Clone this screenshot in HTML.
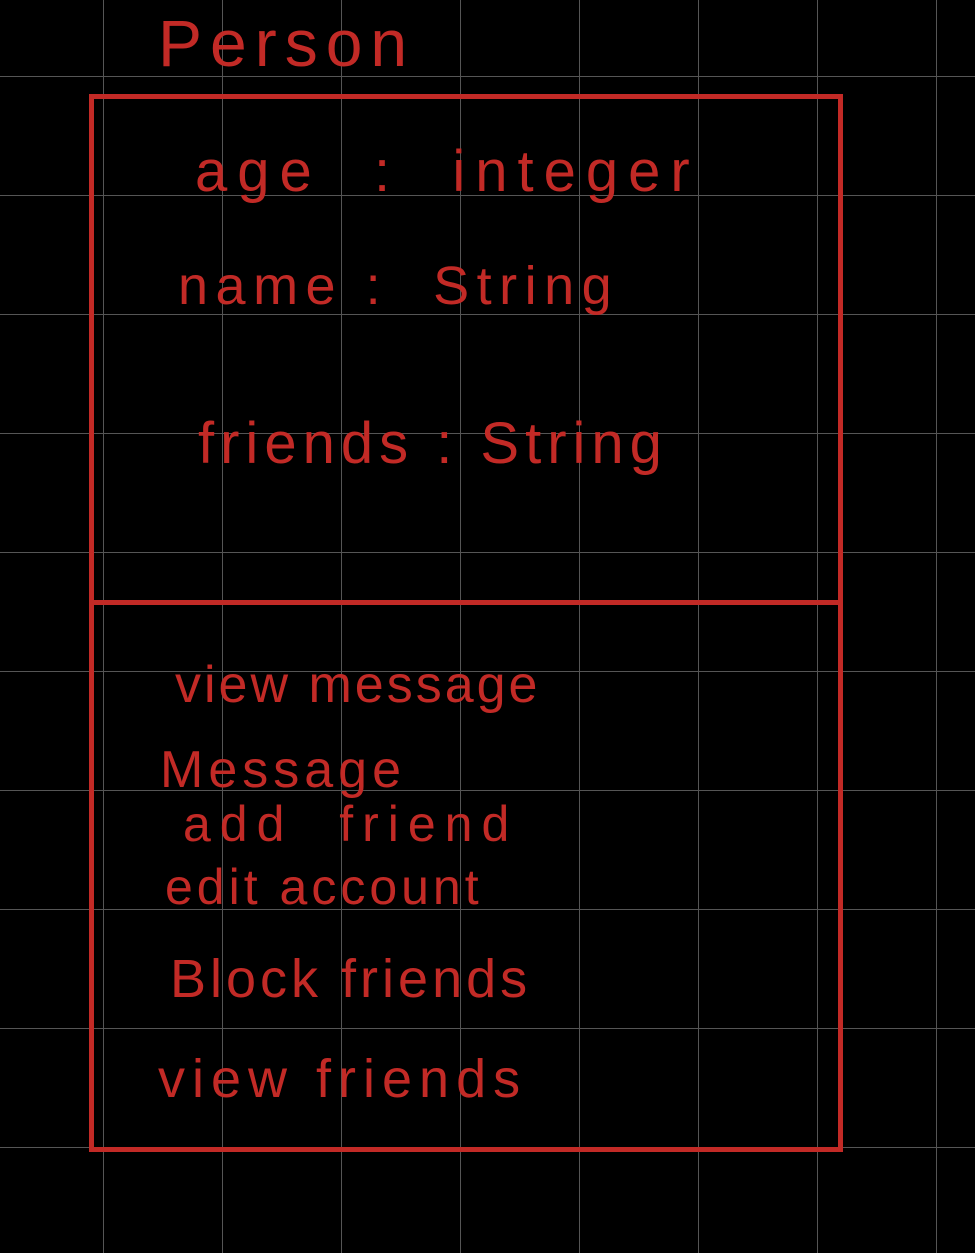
<!DOCTYPE html>
<html><head><style>
html,body{margin:0;padding:0;background:#000;}
body{width:975px;height:1253px;position:relative;overflow:hidden;
background-color:#000;
background-image:
linear-gradient(to right, #555 1px, transparent 1px),
linear-gradient(to bottom, #555 1px, transparent 1px);
background-size:119px 119px;
background-position:103px 76px;}
.box{position:absolute;left:89px;top:94px;width:744px;height:1048px;border:5px solid #c22a26;}
.div{position:absolute;left:89px;top:600px;width:754px;height:5px;background:#c22a26;}
.t{position:absolute;color:#c22a26;font-family:"Liberation Sans",sans-serif;white-space:nowrap;}
</style></head><body>
<div class="box"></div>
<div class="div"></div>
<div class="t" style="left:158px;top:5px;font-size:66px;letter-spacing:8px;">Person</div>
<div class="t" style="left:195px;top:138px;font-size:58px;letter-spacing:10px;">age &nbsp;: &nbsp;integer</div>
<div class="t" style="left:178px;top:255px;font-size:54px;letter-spacing:7.5px;">name : &nbsp;String</div>
<div class="t" style="left:198px;top:410px;font-size:58px;letter-spacing:6px;">friends : String</div>
<div class="t" style="left:175px;top:655px;font-size:52px;letter-spacing:3px;">view message</div>
<div class="t" style="left:160px;top:740px;font-size:52px;letter-spacing:5px;">Message</div>
<div class="t" style="left:183px;top:795px;font-size:50px;letter-spacing:9px;">add &nbsp;friend</div>
<div class="t" style="left:165px;top:858px;font-size:50px;letter-spacing:4px;">edit account</div>
<div class="t" style="left:170px;top:948px;font-size:54px;letter-spacing:4px;">Block friends</div>
<div class="t" style="left:158px;top:1048px;font-size:54px;letter-spacing:7px;">view friends</div>
</body></html>
